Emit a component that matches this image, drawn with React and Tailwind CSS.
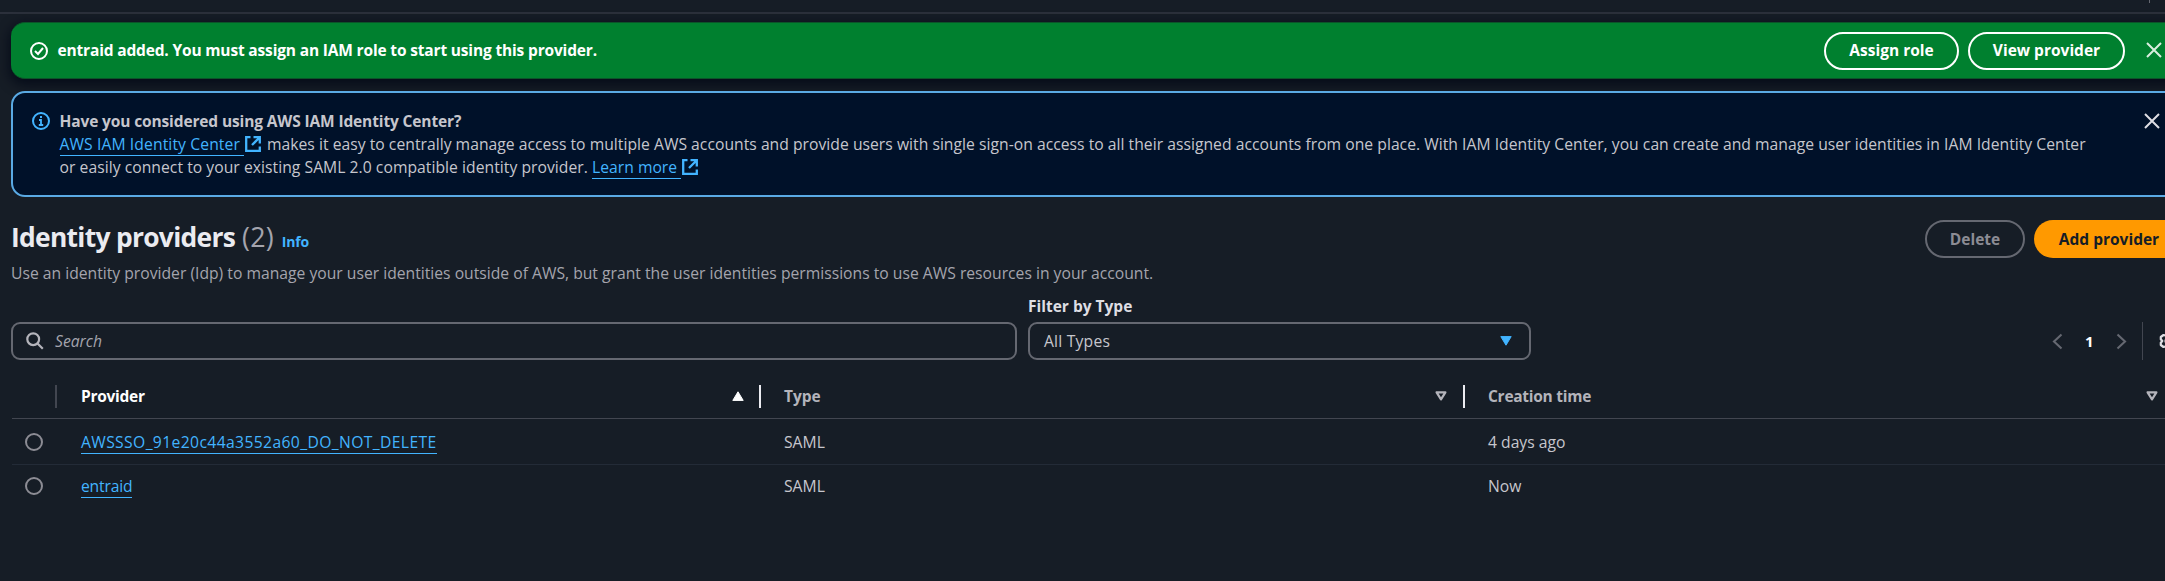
function CheckCircle() {
  return (
    <svg className="size-[18px] shrink-0" viewBox="0 0 18 18" fill="none" stroke="#fff" strokeWidth="2">
      <circle cx="9" cy="9" r="8" />
      <path d="M5 9l3 3 5-6" />
    </svg>
  );
}

function InfoCircle() {
  return (
    <svg className="size-[18px] shrink-0" viewBox="0 0 18 18" fill="none" stroke="#42b4ff" strokeWidth="2">
      <circle cx="9" cy="9" r="8" />
      <path d="M7 8h2v5.5M6.8 13h4.4M8 5h2" strokeWidth="1.8" />
    </svg>
  );
}

function Close({ color }) {
  return (
    <svg className="size-4 shrink-0" viewBox="0 0 16 16" fill="none" stroke={color} strokeWidth="2">
      <path d="M1 1l14 14M15 1L1 15" />
    </svg>
  );
}

function External() {
  return (
    <svg className="ml-px inline-block size-4 align-[-2px]" viewBox="0 0 16 16" fill="none" stroke="#42b4ff" strokeWidth="2.3">
      <path d="M5.5 1.2H1.200v13.600h13.600v-4.300M8.500 1.200h6.300v6.300M14.800 1.200L7 9" />
    </svg>
  );
}

function Chevron({ right }) {
  return (
    <svg className="h-[17px] w-[11px] shrink-0" viewBox="0 0 11 17" fill="none" stroke="#656871" strokeWidth="2.1">
      <path d={right ? "M1.5 1.5l7.5 7-7.5 7" : "M9.5 1.5L2 8.5l7.5 7"} />
    </svg>
  );
}

function SortDown() {
  return (
    <svg className="h-2.5 w-3 shrink-0" viewBox="0 0 12 10" fill="none" stroke="#b4b4bb" strokeWidth="2.2" strokeLinejoin="round">
      <path d="M1.6 1.3h8.8L6 8.3z" />
    </svg>
  );
}

function Radio() {
  return <span className="size-[18px] rounded-full border-2 border-[#8c8c94]" />;
}

const columns = "grid grid-cols-[45px_704px_704px_704px] w-[2157px]";

function Row({ name, type, time, tracking, last }) {
  return (
    <div className={`${columns} ${last ? "h-[42px]" : "h-[46px] border-b border-[#232b37]"}`}>
      <div className="flex items-center pl-[13px]">
        <Radio />
      </div>
      <div className="flex items-center pt-0.5 pl-6">
        <a className={`border-b-[1.5px] border-[#42b4ff] leading-[21px] text-[#42b4ff] ${tracking}`}>{name}</a>
      </div>
      <div className="flex items-center pt-px pl-[23px]">{type}</div>
      <div className="flex items-center pt-px pl-[23px]">{time}</div>
    </div>
  );
}

export default function App() {
  return (
    <div className="h-[581px] w-[2165px] overflow-hidden bg-[#161d26] font-['Open_Sans','Noto_Sans',sans-serif] text-[15.7px] leading-[23px] whitespace-nowrap text-[#c6c6cd]">
      <div className="flex h-3.5 items-start justify-end border-b-2 border-[#2b303b] pr-[15px]">
        <span className="h-[3px] w-px bg-[#656871]" />
      </div>

      <div className="mt-2 ml-[11px] flex h-[57px] w-[2200px] items-center rounded-[14px] border-y border-[#0b5429] bg-[#00802f] pl-[19px] text-[15.5px] font-bold text-white shadow-[0_4px_12px_2px_rgba(0,7,22,0.75)]">
        <CheckCircle />
        <span className="ml-[9.5px] grow tracking-[-0.163px]">
          entraid added. You must assign an IAM role to start using this provider.
        </span>
        <button className="h-[38px] w-[135px] rounded-full border-2 border-white">Assign role</button>
        <button className="mr-[21px] ml-[9px] h-[38px] w-[157px] rounded-full border-2 border-white">View provider</button>
        <div className="mr-[49px] flex -translate-y-px">
          <Close color="#d9eedf" />
        </div>
      </div>

      <div className="mt-3 ml-[11px] flex h-[106px] w-[2200px] rounded-[14px] border-2 border-[#5aaae4] bg-[#001129] pt-[17px] pl-[19px]">
        <div className="mt-[2px]">
          <InfoCircle />
        </div>
        <div className="ml-[9.5px] grow">
          <div className="text-[15.5px] font-bold tracking-[-0.13px]">Have you considered using AWS IAM Identity Center?</div>
          <div className="h-[23px]">
            <a className="border-b-[1.5px] border-[#42b4ff] pr-1 tracking-[0.1px] text-[#42b4ff]">AWS IAM Identity Center</a>
            <External />
            <span className="ml-[6px] tracking-[0.022px]">
              makes it easy to centrally manage access to multiple AWS accounts and provide users with single sign-on access to all their assigned accounts from one place. With IAM Identity Center, you can create and manage user identities in IAM Identity Center
            </span>
          </div>
          <div>
            <span className="tracking-[0.037px]">or easily connect to your existing SAML 2.0 compatible identity provider. </span>
            <a className="border-b-[1.5px] border-[#42b4ff] pr-1 text-[#42b4ff]">Learn more</a>
            <External />
          </div>
        </div>
        <div className="mt-[3px] mr-[49px]">
          <Close color="#dedee3" />
        </div>
      </div>

      <div className="mt-[23px] ml-[11px] flex h-[38px] w-[2200px] items-center">
        <div className="flex grow items-baseline leading-[38px]">
          <h1 className="text-[26.4px] font-bold tracking-[-0.7px] text-[#ebebf0]">Identity providers</h1>
          <span className="ml-[7px] text-[26.8px] tracking-[0.2px] text-[#a4a4ad]">(2)</span>
          <a className="ml-[8px] text-[14px] font-bold tracking-[-0.2px] text-[#42b4ff]">Info</a>
        </div>
        <button className="h-[38px] w-[100px] rounded-full border-2 border-[#656871] text-[15.5px] font-bold text-[#8c8c94]">Delete</button>
        <button className="mr-[27px] ml-[9px] h-[38px] w-[150px] rounded-full bg-[#ff9900] text-[15.5px] font-bold text-[#161d26]">Add provider</button>
      </div>

      <p className="mt-[4px] ml-[11px] text-[#a4a4ad]">
        Use an identity provider (Idp) to manage your user identities outside of AWS, but grant the user identities permissions to use AWS resources in your account.
      </p>

      <div className="mt-[15px] ml-[11px] flex h-[76px] w-[2200px] items-start">
        <div className="mt-[22px] flex h-[38px] w-[1006px] items-center rounded-[9px] border-2 border-[#656871] pl-[13px]">
          <svg className="size-[18px]" viewBox="0 0 18 18" fill="none" stroke="#b4b4bb" strokeWidth="2.2">
            <circle cx="7.2" cy="7.2" r="5.9" />
            <path d="M11.3 11.3l5.5 5.5" />
          </svg>
          <span className="ml-[11px] text-[#a4a4ad] italic">Search</span>
        </div>
        <div className="ml-[11px] w-[503px]">
          <div className="-mt-[3px] h-[25px] text-[15.5px] leading-[19px] font-bold text-[#dedee3]">Filter by Type</div>
          <div className="flex h-[38px] items-center justify-between rounded-[9px] border-2 border-[#656871] pr-[17px] pl-[14px]">
            <span className="tracking-[0.2px]">All Types</span>
            <svg className="h-2.5 w-3" viewBox="0 0 12 10" fill="#42b4ff" stroke="#42b4ff" strokeLinejoin="round">
              <path d="M.8.6h10.4L6 9.2z" />
            </svg>
          </div>
        </div>
        <div className="mt-[22px] ml-[521px] flex h-[38px] items-center">
          <Chevron />
          <span className="mx-[22px] text-[15px] font-bold text-white">1</span>
          <Chevron right />
          <span className="mr-4 ml-[15px] h-[38px] w-px bg-[#424650]" />
          <svg className="size-[18px]" viewBox="0 0 18 18" fill="none" stroke="#dedee3" strokeWidth="2.2" strokeLinejoin="round">
            <circle cx="9" cy="9" r="2.5" />
            <path d="M7 3.500L4.500 3 1.800 5v2.200L3.300 9l-1.500 1.800V13l2.700 2L7 14.500l2 2 2-2 2.500.500 2.700-2v-2.200L14.700 9l1.500-1.800V5l-2.700-2-2.500.500-2-2z" />
          </svg>
        </div>
      </div>

      <div className="ml-3">
        <div className={`${columns} mt-[-1px] h-[44px] border-b border-[#424650] text-[15.5px] font-bold`}>
          <div className="flex h-8 items-end justify-end">
            <span className="-mb-px h-[23px] w-0.5 bg-[#424650]" />
          </div>
          <div className="flex h-8 items-end">
            <span className="-mb-px ml-6 grow tracking-[-0.27px] text-white">Provider</span>
            <svg className="mr-[15px] mb-[6px] h-2.5 w-3" viewBox="0 0 12 10" fill="#fff" stroke="#fff" strokeLinejoin="round">
              <path d="M.8 9.400h10.4L6 .8z" />
            </svg>
            <span className="-mb-px h-[23px] w-0.5 bg-[#ebebf0]" />
          </div>
          <div className="flex h-8 items-end">
            <span className="-mb-px ml-[23px] grow text-[#b4b4bb]">Type</span>
            <div className="mr-[16px] mb-[6px] flex"><SortDown /></div>
            <span className="-mb-px h-[23px] w-0.5 bg-[#ebebf0]" />
          </div>
          <div className="flex h-8 items-end">
            <span className="-mb-px ml-[23px] grow tracking-[-0.27px] text-[#b4b4bb]">Creation time</span>
            <div className="mr-[11px] mb-[6px] flex"><SortDown /></div>
          </div>
        </div>
        <Row name="AWSSSO_91e20c44a3552a60_DO_NOT_DELETE" type="SAML" time="4 days ago" tracking="tracking-[0.37px]" />
        <Row name="entraid" type="SAML" time="Now" tracking="tracking-[-0.2px]" last />
      </div>
    </div>
  );
}
